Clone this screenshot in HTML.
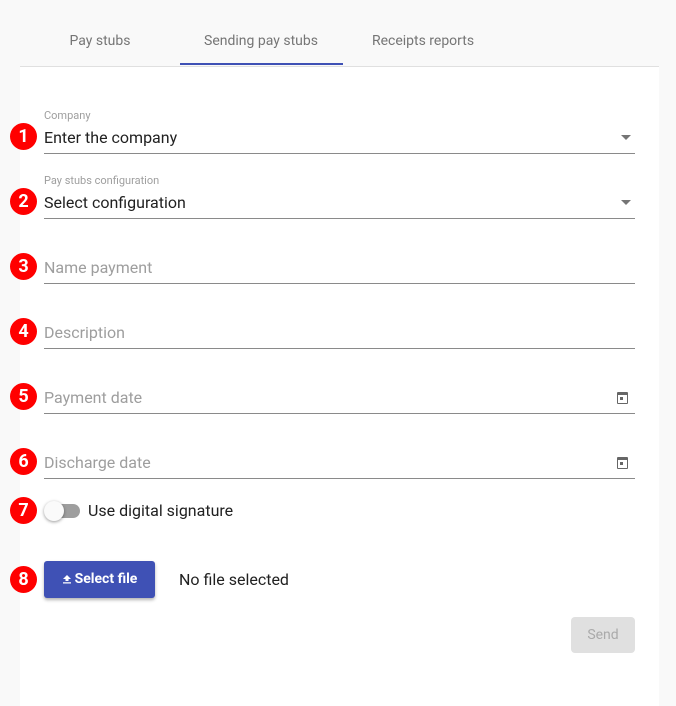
<!DOCTYPE html>
<html><head><style>
*{margin:0;padding:0;box-sizing:border-box}
body{width:676px;height:697px;background:#f9f9f9;font-family:Roboto,"Liberation Sans",sans-serif;position:relative;overflow:hidden}
.abs{position:absolute}
.tab{position:absolute;top:33px;font-size:14px;color:#757575;transform:translateX(-50%);white-space:nowrap}
.card{position:absolute;left:20px;top:66px;width:639px;height:640px;background:#fff;border-top:1px solid #e0e0e0}
.line{position:absolute;left:44px;width:591px;height:1px;background:#8a8a8a}
.lbl{position:absolute;left:44px;font-size:11px;color:#9e9e9e}
.val{position:absolute;left:44px;font-size:16px;color:#212121}
.ph{position:absolute;left:44px;font-size:16px;color:#9e9e9e}
.b{position:absolute;left:10px;width:27px;height:27px;border-radius:50%;background:#f00;color:#fff;font-weight:bold;font-size:18px;text-align:center;line-height:27px}
.arr{position:absolute;left:621px;width:0;height:0;border-left:5px solid transparent;border-right:5px solid transparent;border-top:5px solid #757575}
.cal{position:absolute;left:617px;width:11px;height:12px;border:1.5px solid #666;border-top-width:3px;border-radius:1px}
.cal:after{content:"";position:absolute;left:2px;top:2px;width:3px;height:3px;background:#666}
</style></head><body>
<div class="tab" style="left:100px">Pay stubs</div>
<div class="tab" style="left:261px">Sending pay stubs</div>
<div class="tab" style="left:423px">Receipts reports</div>
<div class="card"></div>
<div class="abs" style="left:180px;top:63px;width:163px;height:2px;background:#3f51b5"></div>

<div class="lbl" style="top:109px">Company</div>
<div class="val" style="top:128px">Enter the company</div>
<div class="arr" style="top:135px"></div>
<div class="line" style="top:153px"></div>
<div class="b" style="top:123px">1</div>

<div class="lbl" style="top:174px">Pay stubs configuration</div>
<div class="val" style="top:193px">Select configuration</div>
<div class="arr" style="top:200px"></div>
<div class="line" style="top:218px"></div>
<div class="b" style="top:188px">2</div>

<div class="ph" style="top:258px">Name payment</div>
<div class="line" style="top:283px"></div>
<div class="b" style="top:253px">3</div>

<div class="ph" style="top:323px">Description</div>
<div class="line" style="top:348px"></div>
<div class="b" style="top:318px">4</div>

<div class="ph" style="top:388px">Payment date</div>
<div class="cal" style="top:392px"></div>
<div class="line" style="top:413px"></div>
<div class="b" style="top:383px">5</div>

<div class="ph" style="top:453px">Discharge date</div>
<div class="cal" style="top:457px"></div>
<div class="line" style="top:478px"></div>
<div class="b" style="top:448px">6</div>

<div class="b" style="top:497px">7</div>
<div class="abs" style="left:46px;top:504px;width:34px;height:14px;border-radius:7px;background:#9e9e9e"></div>
<div class="abs" style="left:44px;top:501px;width:20px;height:20px;border-radius:50%;background:#fafafa;box-shadow:0 1px 3px rgba(0,0,0,.4)"></div>
<div class="abs" style="left:88px;top:501px;font-size:16px;color:#212121">Use digital signature</div>

<div class="b" style="top:566px">8</div>
<div class="abs" style="left:44px;top:561px;width:111px;height:37px;background:#3f51b5;border-radius:3px;box-shadow:0 2px 3px rgba(0,0,0,.3);color:#fff;font-size:14px;font-weight:bold;line-height:37px;text-align:center">
<svg width="10" height="10" viewBox="0 0 10 10" style="vertical-align:-1px;margin-right:3px"><path d="M5 1L1 5h2.5v2h3V5H9z M1 8.2h8v1.3H1z" fill="#fff"/></svg>Select file</div>
<div class="abs" style="left:179px;top:570px;font-size:16px;color:#212121">No file selected</div>

<div class="abs" style="left:571px;top:617px;width:64px;height:36px;background:#e0e0e0;border-radius:4px;color:#aaa;font-size:14px;text-align:center;line-height:36px">Send</div>
</body></html>
